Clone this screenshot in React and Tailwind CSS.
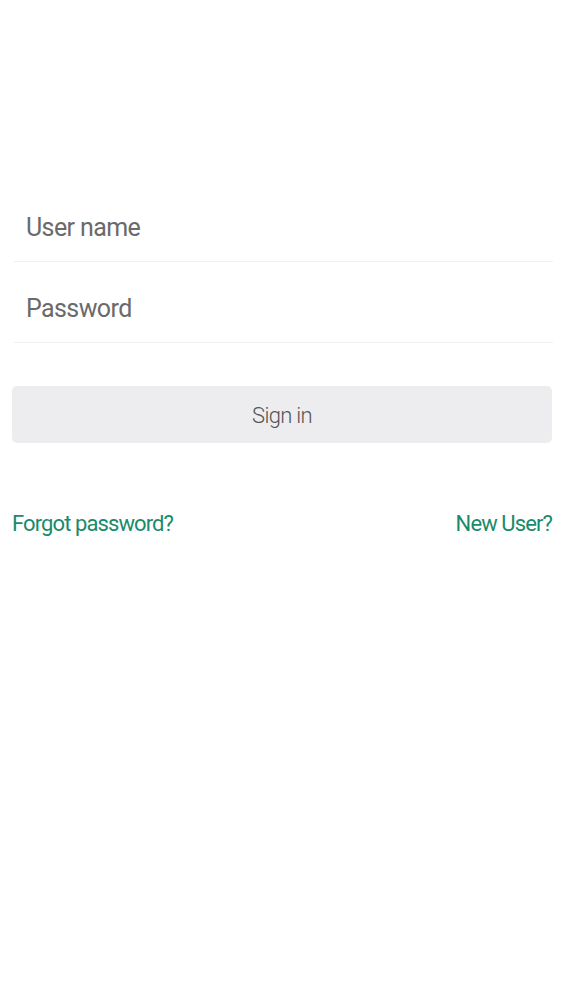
export default function App() {
  return (
    <div className="min-h-[1000px] w-full bg-white" style={{ fontFamily: 'Roboto, "Liberation Sans", sans-serif' }}>
      <div className="pt-[181px] px-[12px]">
        <div className="ml-[2px] mr-[-2px]">
          <div className="h-[81px] pt-[32px] border-b border-[#f0f0f2]">
            <div className="pl-[12px] text-[25px] leading-[1.2] text-[#6a6a6a] tracking-[-0.6px]">User name</div>
          </div>
          <div className="h-[81px] pt-[32px] border-b border-[#f0f0f2]">
            <div className="pl-[12px] text-[25px] leading-[1.2] text-[#6a6a6a] tracking-[-0.6px]">Password</div>
          </div>
        </div>
        <div className="mt-[43px] mr-[-1px] h-[57px] rounded-[5px] bg-[#ededef] flex items-center justify-center pt-[3px]">
          <span className="text-[22px] leading-[1.2] text-[#555555] tracking-[-0.7px] font-light">Sign in</span>
        </div>
        <div className="mt-[68px] mr-[-1px] flex justify-between text-[22px] leading-[1.2] text-[#1a8a6c] tracking-[-0.9px]">
          <span>Forgot password?</span>
          <span>New User?</span>
        </div>
      </div>
    </div>
  );
}
